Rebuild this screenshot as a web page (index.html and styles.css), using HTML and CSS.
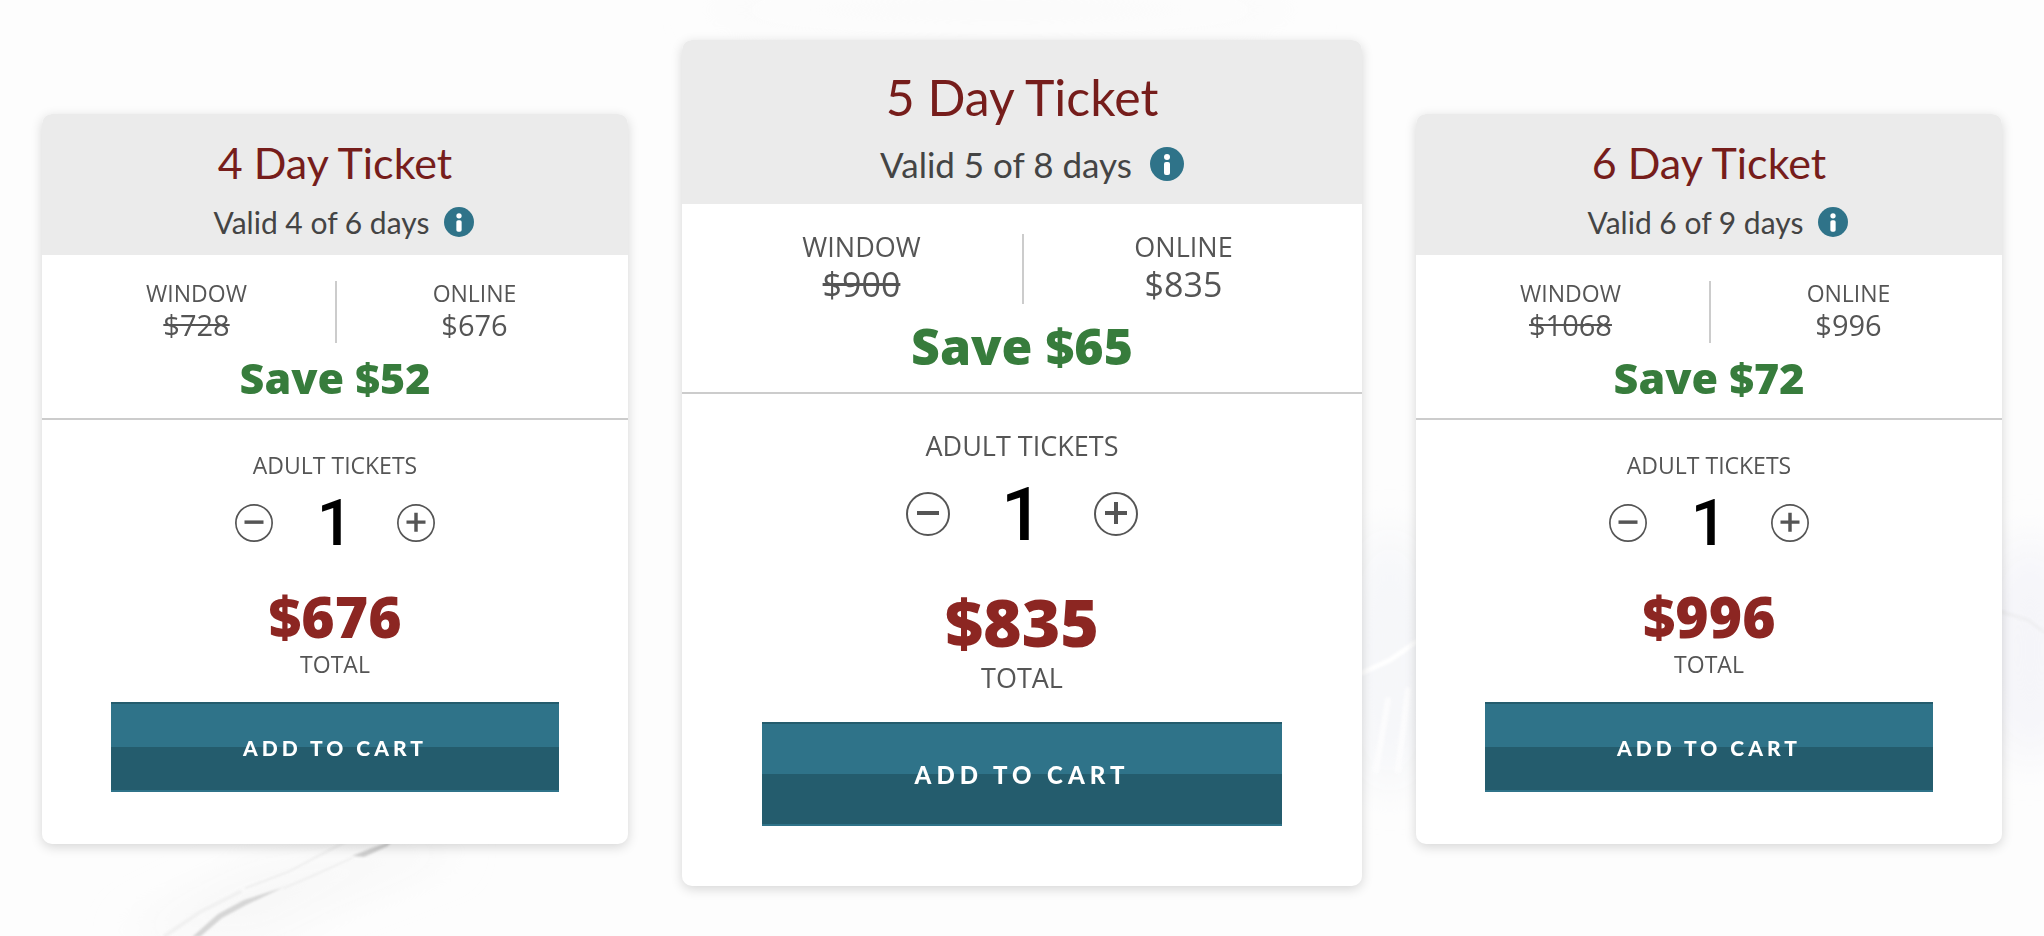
FILE: index.html
```html
<!DOCTYPE html>
<html lang="en">
<head>
    <meta charset="UTF-8">
    <meta name="viewport" content="width=device-width, initial-scale=1.0">
    <title>Lift Tickets</title>
    <link rel="stylesheet" href="styles.css">
</head>
<body>
    <!-- marble background -->
    <svg class="marble" viewBox="0 0 2044 936" preserveAspectRatio="xMidYMid slice" aria-hidden="true">
        <defs>
            <filter id="soft" x="-50%" y="-50%" width="200%" height="200%"><feGaussianBlur stdDeviation="20"/></filter>
            <filter id="vein" x="-20%" y="-20%" width="140%" height="140%"><feGaussianBlur stdDeviation="1"/></filter>
        </defs>
        <g filter="url(#soft)">
            <ellipse cx="1390" cy="660" rx="50" ry="130" fill="#f6f7f9"/>
            <ellipse cx="2030" cy="650" rx="50" ry="110" fill="#f5f5f9"/>
            <path d="M120 936 L250 870 L420 840 L460 850 L330 900 L260 936 Z" fill="#f7f7f7"/>
            <ellipse cx="1000" cy="10" rx="300" ry="16" fill="#fafafa"/>
        </g>
        <g filter="url(#vein)" fill="none" stroke-linecap="round">
            <path d="M192 937 L218 914 L244 900 L284 887 L246 905 L222 918 L200 937 Z" fill="#d6d6d6"/>
            <path d="M352 856 L372 848 L392 841 L388 846 L364 857 Z" fill="#cfcfcf"/>
            <path d="M284 888 L310 877 L352 858" stroke="#efefef" stroke-width="2"/>
            <path d="M246 888 L290 871 L345 842" stroke="#eeeeee" stroke-width="2"/>
            <path d="M165 936 L200 912 L240 892" stroke="#f1f1f1" stroke-width="4"/>
            <path d="M1362 673 L1390 660 L1416 642" stroke="#ffffff" stroke-width="5"/>
            <path d="M1376 770 L1388 700 M1398 770 L1408 690" stroke="#fcfcfd" stroke-width="6"/>
            <path d="M2002 612 L2028 620 L2044 632" stroke="#f0f0f3" stroke-width="4"/>
        </g>
    </svg>

    <main class="tickets">
        <section class="card">
            <header class="card-header">
                <h2 class="title">4 Day Ticket</h2>
                <div class="valid">
                    <span>Valid 4 of 6 days</span>
                    <button class="info" type="button" aria-label="More info">
                        <svg viewBox="0 0 34 34"><circle cx="17" cy="17" r="17"/><circle class="mark" cx="17" cy="10" r="3"/><rect class="mark" x="14" y="15" width="6" height="13" rx="2"/></svg>
                    </button>
                </div>
            </header>
            <div class="prices">
                <div class="compare">
                    <div class="price">
                        <div class="label">WINDOW</div>
                        <s class="amount">$728</s>
                    </div>
                    <div class="price">
                        <div class="label">ONLINE</div>
                        <span class="amount">$676</span>
                    </div>
                </div>
                <div class="save">Save $52</div>
            </div>
            <div class="order">
                <label class="label" for="qty-4">ADULT TICKETS</label>
                <div class="stepper">
                    <button class="step" type="button" data-step="-1" aria-label="Remove ticket">
                        <svg viewBox="0 0 44 44"><circle cx="22" cy="22" r="21"/><path d="M11 21 H33"/></svg>
                    </button>
                    <input class="qty" id="qty-4" type="text" inputmode="numeric" value="1">
                    <button class="step" type="button" data-step="1" aria-label="Add ticket">
                        <svg viewBox="0 0 44 44"><circle cx="22" cy="22" r="21"/><path d="M11 21 H33 M22 10 V32"/></svg>
                    </button>
                </div>
                <div class="total" data-price="676">$676</div>
                <div class="label">TOTAL</div>
                <button class="cart" type="button">ADD TO CART</button>
            </div>
        </section>

        <section class="card featured">
            <header class="card-header">
                <h2 class="title">5 Day Ticket</h2>
                <div class="valid">
                    <span>Valid 5 of 8 days</span>
                    <button class="info" type="button" aria-label="More info">
                        <svg viewBox="0 0 34 34"><circle cx="17" cy="17" r="17"/><circle class="mark" cx="17" cy="10" r="3"/><rect class="mark" x="14" y="15" width="6" height="13" rx="2"/></svg>
                    </button>
                </div>
            </header>
            <div class="prices">
                <div class="compare">
                    <div class="price">
                        <div class="label">WINDOW</div>
                        <s class="amount">$900</s>
                    </div>
                    <div class="price">
                        <div class="label">ONLINE</div>
                        <span class="amount">$835</span>
                    </div>
                </div>
                <div class="save">Save $65</div>
            </div>
            <div class="order">
                <label class="label" for="qty-5">ADULT TICKETS</label>
                <div class="stepper">
                    <button class="step" type="button" data-step="-1" aria-label="Remove ticket">
                        <svg viewBox="0 0 44 44"><circle cx="22" cy="22" r="21"/><path d="M11 21 H33"/></svg>
                    </button>
                    <input class="qty" id="qty-5" type="text" inputmode="numeric" value="1">
                    <button class="step" type="button" data-step="1" aria-label="Add ticket">
                        <svg viewBox="0 0 44 44"><circle cx="22" cy="22" r="21"/><path d="M11 21 H33 M22 10 V32"/></svg>
                    </button>
                </div>
                <div class="total" data-price="835">$835</div>
                <div class="label">TOTAL</div>
                <button class="cart" type="button">ADD TO CART</button>
            </div>
        </section>

        <section class="card">
            <header class="card-header">
                <h2 class="title">6 Day Ticket</h2>
                <div class="valid">
                    <span>Valid 6 of 9 days</span>
                    <button class="info" type="button" aria-label="More info">
                        <svg viewBox="0 0 34 34"><circle cx="17" cy="17" r="17"/><circle class="mark" cx="17" cy="10" r="3"/><rect class="mark" x="14" y="15" width="6" height="13" rx="2"/></svg>
                    </button>
                </div>
            </header>
            <div class="prices">
                <div class="compare">
                    <div class="price">
                        <div class="label">WINDOW</div>
                        <s class="amount">$1068</s>
                    </div>
                    <div class="price">
                        <div class="label">ONLINE</div>
                        <span class="amount">$996</span>
                    </div>
                </div>
                <div class="save">Save $72</div>
            </div>
            <div class="order">
                <label class="label" for="qty-6">ADULT TICKETS</label>
                <div class="stepper">
                    <button class="step" type="button" data-step="-1" aria-label="Remove ticket">
                        <svg viewBox="0 0 44 44"><circle cx="22" cy="22" r="21"/><path d="M11 21 H33"/></svg>
                    </button>
                    <input class="qty" id="qty-6" type="text" inputmode="numeric" value="1">
                    <button class="step" type="button" data-step="1" aria-label="Add ticket">
                        <svg viewBox="0 0 44 44"><circle cx="22" cy="22" r="21"/><path d="M11 21 H33 M22 10 V32"/></svg>
                    </button>
                </div>
                <div class="total" data-price="996">$996</div>
                <div class="label">TOTAL</div>
                <button class="cart" type="button">ADD TO CART</button>
            </div>
        </section>
    </main>

    <script>
        // plus / minus buttons update the quantity and the total
        document.querySelectorAll('.card').forEach(function(card) {
            const qty = card.querySelector('.qty');
            const total = card.querySelector('.total');

            function update(count) {
                qty.value = Math.max(1, count || 1);
                total.textContent = '$' + qty.value * total.dataset.price;
            }

            card.querySelectorAll('.step').forEach(function(button) {
                button.addEventListener('click', function() {
                    update(Number(qty.value) + Number(button.dataset.step));
                });
            });

            qty.addEventListener('change', function() {
                update(parseInt(qty.value, 10));
            });
        });
    </script>
</body>
</html>
```
FILE: styles.css
```css
* {
    box-sizing: border-box;
}

body {
    margin: 0;
    background-color: #fdfdfd;
    color: #555;
    font-family: 'Open Sans', 'Noto Sans', sans-serif;
}

button,
input {
    margin: 0;
    padding: 0;
    border: 0;
    background: none;
    font-family: inherit;
}

button {
    cursor: pointer;
}

.marble {
    position: fixed;
    top: 0;
    left: 0;
    width: 100%;
    height: 100%;
    z-index: -1;
}

.tickets {
    display: grid;
    grid-template-columns: 586fr 680fr 586fr;
    align-items: start;
    gap: 54px;
    padding: 40px 42px;
}

.card {
    margin-top: 74px;
    background-color: #fff;
    border-radius: 10px;
    box-shadow: 0 3px 12px rgba(0, 0, 0, 0.16);
    text-align: center;
    overflow: hidden;
}

/* header */
.card-header {
    padding: 25px 20px 15px;
    background-color: #ebebeb;
    font-family: 'Lato', sans-serif;
}

.title {
    margin: 0 0 17px;
    color: #761d1b;
    font-size: 43px;
    font-weight: 400;
    line-height: 48px;
}

.valid {
    display: flex;
    justify-content: center;
    align-items: center;
    gap: 15px;
    padding-left: 18px;
    color: #444;
    font-size: 30px;
    line-height: 36px;
}

.info {
    width: 30px;
    height: 30px;
}

.info svg,
.step svg {
    display: block;
    width: 100%;
    height: 100%;
}

.info svg {
    fill: #2f7389;
}

.info .mark {
    fill: #fff;
}

/* prices */
.prices {
    padding: 26px 0 18px;
    border-bottom: 2px solid #ccc;
}

.compare {
    display: grid;
    grid-template-columns: 1fr 1fr;
    padding: 0 16px;
}

.price + .price {
    border-left: 2px solid #ccc;
}

.label {
    display: block;
    font-size: 23px;
    line-height: 26px;
}

.price .label {
    line-height: 24px;
}

.amount {
    display: block;
    margin-top: 2px;
    font-size: 29px;
    line-height: 36px;
}

.save {
    margin-top: 13px;
    color: #377c3c;
    font-size: 43px;
    font-weight: 800;
    line-height: 44px;
}

/* quantity and total */
.order {
    padding: 32px 69px 52px;
}

.stepper {
    display: flex;
    justify-content: center;
    align-items: center;
    gap: 32px;
    margin-top: 13px;
}

.step {
    width: 38px;
    height: 38px;
}

.step svg {
    fill: none;
    stroke: #555;
    stroke-width: 2;
}

.step path {
    stroke-width: 4;
}

.qty {
    width: 60px;
    height: 64px;
    color: #000;
    font-family: 'Roboto', sans-serif;
    font-size: 64px;
    font-weight: 500;
    line-height: 64px;
    text-align: center;
}

.total {
    margin: 33px 0 7px;
    color: #8c2622;
    font-size: 57px;
    font-weight: 800;
    line-height: 56px;
}

.cart {
    display: block;
    width: 100%;
    height: 90px;
    margin-top: 25px;
    border-top: 2px solid #245c6d;
    border-bottom: 2px solid #2f7389;
    background: linear-gradient(#2f7389 50%, #245c6d 50%);
    color: #fff;
    font-family: 'Lato', sans-serif;
    font-size: 21px;
    font-weight: 900;
    letter-spacing: 4px;
}

/* bigger card in the middle */
.featured {
    margin-top: 0;
}

.featured .card-header {
    padding: 29px 20px 19px;
}

.featured .title {
    margin-bottom: 18px;
    font-size: 50px;
    line-height: 56px;
}

.featured .valid {
    gap: 18px;
    padding-left: 20px;
    font-size: 35px;
    line-height: 42px;
}

.featured .info {
    width: 34px;
    height: 34px;
}

.featured .prices {
    padding: 30px 0 21px;
}

.featured .compare {
    padding: 0 19px;
}

.featured .label {
    font-size: 27px;
    line-height: 30px;
}

.featured .price .label {
    line-height: 26px;
}

.featured .amount {
    margin-top: 4px;
    font-size: 34px;
    line-height: 40px;
}

.featured .save {
    margin-top: 17px;
    font-size: 50px;
    line-height: 50px;
}

.featured .order {
    padding: 37px 80px 60px;
}

.featured .stepper {
    gap: 37px;
    margin-top: 16px;
}

.featured .step {
    width: 44px;
    height: 44px;
}

.featured .qty {
    width: 70px;
    height: 74px;
    font-size: 74px;
    line-height: 74px;
}

.featured .total {
    margin: 38px 0 10px;
    font-size: 66px;
    line-height: 64px;
}

.featured .cart {
    height: 104px;
    margin-top: 29px;
    font-size: 24px;
    letter-spacing: 5px;
}
```
